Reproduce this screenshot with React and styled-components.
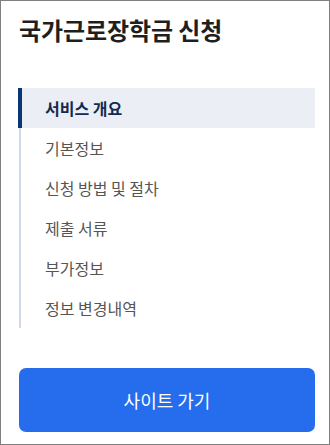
import React from 'react';
import styled, { createGlobalStyle } from 'styled-components';

const GlobalStyle = createGlobalStyle`
  html, body {
    margin: 0;
    padding: 0;
    background: #ffffff;
  }
  body {
    font-family: "Noto Sans CJK KR", "Noto Sans", sans-serif;
  }
`;

const Panel = styled.aside`
  box-sizing: border-box;
  width: 330px;
  height: 445px;
  border: 1px solid #808080;
  padding: 13px 14px 0 18px;
  display: flex;
  flex-direction: column;
`;

const Title = styled.h2`
  margin: 0;
  font-size: 24px;
  line-height: 32px;
  font-weight: 700;
  color: #1f1f1f;
  letter-spacing: -0.1px;
`;

const Menu = styled.nav`
  margin-top: 42px;
  display: flex;
  flex-direction: column;
`;

const MenuItem = styled.a`
  display: flex;
  align-items: center;
  height: 40px;
  box-sizing: border-box;
  font-size: 16px;
  text-decoration: none;
  border-left: ${({ $active }) => ($active ? '4px solid #0b3675' : '2px solid #cfd8e6')};
  margin-left: ${({ $active }) => ($active ? '-1px' : '0')};
  padding-left: ${({ $active }) => ($active ? '23px' : '24px')};
  background: ${({ $active }) => ($active ? '#ebeff5' : 'transparent')};
  color: ${({ $active }) => ($active ? '#132a52' : '#555555')};
  font-weight: ${({ $active }) => ($active ? 700 : 400)};
`;

const SiteButton = styled.button`
  margin-top: 40px;
  height: 64px;
  border: none;
  border-radius: 7px;
  background: #256ded;
  color: #ffffff;
  font-family: inherit;
  font-size: 18px;
  font-weight: 400;
  cursor: pointer;
`;

const items = ['서비스 개요', '기본정보', '신청 방법 및 절차', '제출 서류', '부가정보', '정보 변경내역'];

export default function App() {
  return (
    <>
      <GlobalStyle />
      <Panel>
        <Title>국가근로장학금 신청</Title>
        <Menu>
          {items.map((label, i) => (
            <MenuItem key={label} href="#" $active={i === 0}>
              {label}
            </MenuItem>
          ))}
        </Menu>
        <SiteButton>사이트 가기</SiteButton>
      </Panel>
    </>
  );
}
